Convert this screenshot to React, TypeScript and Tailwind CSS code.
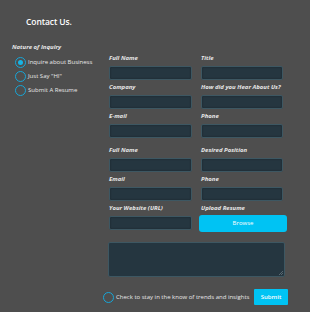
import React from "react";

const labelCls = "h-[10px] leading-[10px] text-[6px] font-bold italic text-[#e6e6e6] whitespace-nowrap";
const inputCls = "mt-[3px] h-[14px] w-full rounded-[2px] border border-[#3d5762] bg-[#253640] shadow-[inset_0_0_2px_rgba(0,0,0,0.4)]";

function Field({ label }: { label: string }) {
  return (
    <div className="flex flex-col">
      <div className={labelCls}>{label}</div>
      <div className={inputCls} />
    </div>
  );
}

function Radio({ label, checked }: { label: string; checked?: boolean }) {
  return (
    <div className="flex h-[14px] items-center gap-[2px]">
      <span className="flex h-[11px] w-[11px] shrink-0 items-center justify-center rounded-full border-[1.5px] border-[#17a6d8]">
        {checked && <span className="h-[5px] w-[5px] rounded-full bg-[#17b4e6]" />}
      </span>
      <span className="text-[6px] leading-[10px] text-[#e8e8e8] whitespace-nowrap">{label}</span>
    </div>
  );
}

export default function App() {
  return (
    <div className="h-[312px] w-[310px] overflow-hidden bg-[#4e4e4e] font-['Open_Sans',sans-serif] text-white">
      <h1 className="pl-[26px] pt-[16px] text-[8.5px] font-semibold leading-[12px] tracking-[-0.1px]">Contact Us.</h1>

      <div className="mt-[14px] flex">
        {/* Nature of inquiry */}
        <div className="w-[109px] shrink-0 pl-[12px]">
          <div className="h-[10px] text-[6px] font-bold italic leading-[10px] text-[#e6e6e6]">Nature of Inquiry</div>
          <div className="ml-[3px] mt-[3px] flex flex-col">
            <Radio label="Inquire about Business" checked />
            <Radio label={'Just Say "HI"'} />
            <Radio label="Submit A Resume" />
          </div>
        </div>

        {/* Form */}
        <div className="flex-1 pt-[11px]">
          <div className="grid grid-cols-[83px_82px] gap-x-[9px] gap-y-[2px]">
            <Field label="Full Name" />
            <Field label="Title" />
            <Field label="Company" />
            <Field label="How did you Hear About Us?" />
            <Field label="E-mail" />
            <Field label="Phone" />
          </div>

          <div className="mt-[7px] grid grid-cols-[83px_82px] gap-x-[9px] gap-y-[2px]">
            <Field label="Full Name" />
            <Field label="Desired Position" />
            <Field label="Email" />
            <Field label="Phone" />
            <Field label="Your Website (URL)" />
            <div className="flex flex-col">
              <div className={labelCls}>Upload Resume</div>
              <button className="-ml-[2px] mt-[2px] flex h-[17px] w-[88px] items-center justify-center rounded-[3px] bg-[#00c3f3] text-[6px] text-white">
                Browse
              </button>
            </div>
          </div>

          <div className="relative -ml-[1px] mt-[10px] h-[35px] w-[177px] rounded-[2px] border border-[#3d5762] bg-[#253640]">
            <svg className="absolute bottom-[1px] right-[1px]" width="4" height="4" viewBox="0 0 4 4">
              <path d="M4 0L0 4M4 2L2 4" stroke="#7a8a90" strokeWidth="0.6" />
            </svg>
          </div>

          <div className="-ml-[6px] mt-[12px] flex w-[185px] items-center">
            <span className="h-[11px] w-[11px] shrink-0 rounded-full border-[1.5px] border-[#17a6d8]" />
            <span className="ml-[2px] flex-1 whitespace-nowrap text-[6px] text-[#e8e8e8]">
              Check to stay in the know of trends and insights
            </span>
            <button className="flex h-[16px] w-[34px] items-center justify-center rounded-[1px] bg-[#00c3f3] text-[6px] font-semibold text-white">
              Submit
            </button>
          </div>
        </div>
      </div>
    </div>
  );
}
